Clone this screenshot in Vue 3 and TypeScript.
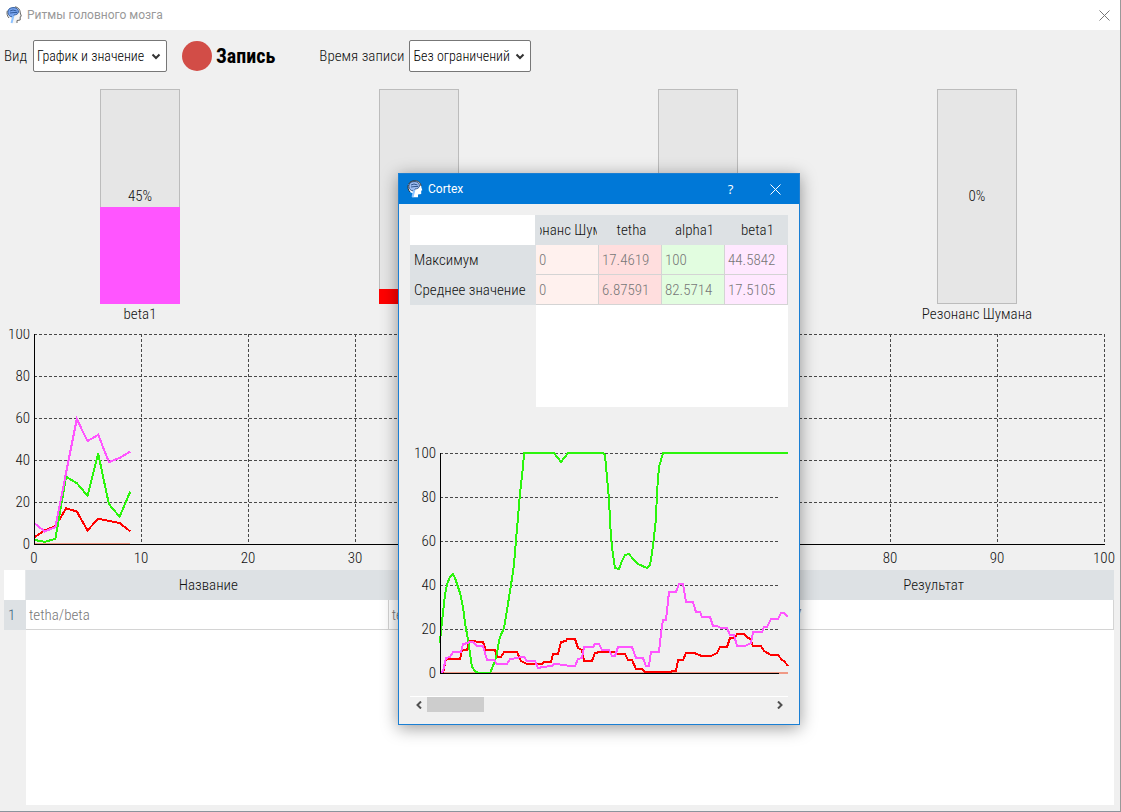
<script setup lang="ts">
import { ref } from 'vue'

interface Rhythm {
  name: string
  value: number
  tone: string
}

interface Series {
  tone: string
  points: string
}

const view = ref('График и значение')
const duration = ref('Без ограничений')

const rhythms: Rhythm[] = [
  { name: 'beta1', value: 45, tone: 'beta' },
  { name: 'tetha', value: 7, tone: 'tetha' },
  { name: 'alpha1', value: 25, tone: 'alpha' },
  { name: 'Резонанс Шумана', value: 0, tone: 'schumann' },
]

const levels = [100, 80, 60, 40, 20, 0]
const seconds = [0, 10, 20, 30, 40, 50, 60, 70, 80, 90, 100]

const toPoints = (values: number[]): string =>
  values.map((v, i) => `${i * 10.7},${(100 - v) * 2.1}`).join(' ')

const liveSeries: Series[] = [
  { tone: 'schumann', points: toPoints([0, 0, 0, 0, 0, 0, 0, 0, 0, 0]) },
  { tone: 'tetha', points: toPoints([3, 6.5, 8.5, 17, 15.5, 6.5, 12, 11, 10, 6]) },
  { tone: 'alpha', points: toPoints([2, 1, 2.5, 32, 29, 23, 43, 19, 13, 25]) },
  { tone: 'beta', points: toPoints([10, 6, 8, 34, 59.5, 49, 52, 39, 41, 44]) },
]

const recordedSeries: Series[] = [
  { tone: 'schumann', points: '0,220 347,220' },
  {
    tone: 'tetha',
    points:
      '2,220 5,206 19,206 21,197 26,197 28,188 42,189 45,197 54,197 56,204 60,204 63,199 76,199 80,208 86,211 101,211 103,209 110,209 112,201 117,201 120,189 125,188 126,186 134,186 137,195 141,197 143,208 151,208 154,200 159,199 174,199 176,201 184,201 187,207 191,207 195,216 201,216 204,219 226,219 235,218 237,207 242,207 245,200 253,200 261,203 270,203 276,200 279,194 286,194 289,185 294,185 296,181 303,181 306,184 309,186 312,193 320,193 323,198 330,202 337,202 341,207 343,208 347,213',
  },
  {
    tone: 'alpha',
    points:
      '-1,190 0,177 2,160 4,142 6,131 9,124 12,121 14,125 16,131 19,140 22,154 24,170 27,187 29,200 31,214 34,218 37,220 49,220 52,213 55,205 57,194 59,184 63,175 66,157 70,132 73,112 75,87 77,64 79,40 82,14 83,0 113,0 120,9 127,0 162,0 164,2 166,24 168,47 170,85 172,102 174,115 178,116 181,108 184,102 188,101 192,106 197,111 206,115 209,112 211,100 213,84 215,65 216,39 218,14 222,0 347,0',
  },
  {
    tone: 'beta',
    points:
      '-1,220 2,218 5,205 9,204 12,199 20,199 22,191 27,190 28,189 32,189 36,193 42,193 46,207 53,207 56,211 66,211 69,206 77,205 79,204 83,204 86,208 94,208 97,215 102,214 111,213 113,211 125,212 127,213 134,213 137,206 141,205 143,194 152,194 154,191 158,191 161,197 168,197 171,203 174,203 177,194 191,194 195,205 202,205 205,213 208,213 210,199 218,199 220,180 222,167 225,167 228,139 235,139 238,131 242,131 245,149 252,149 255,159 259,159 261,164 269,164 272,173 276,173 280,175 286,175 289,182 293,182 296,193 304,193 310,190 312,179 321,179 323,174 326,174 330,166 337,166 340,160 343,160 347,164',
  },
]

const statColumns = [
  { name: 'Резонанс Шумана', tone: 'schumann', max: '0', mean: '0' },
  { name: 'tetha', tone: 'tetha', max: '17.4619', mean: '6.87591' },
  { name: 'alpha1', tone: 'alpha', max: '100', mean: '82.5714' },
  { name: 'beta1', tone: 'beta', max: '44.5842', mean: '17.5105' },
]
</script>

<template>
  <div class="window">
    <header class="titlebar">
      <svg class="logo" viewBox="0 0 16 18" aria-hidden="true">
        <path d="M3 12C1 10 0.700 7 1.500 4.800C2.600 2 5 0.800 8 0.800C12 0.800 14.300 3.500 14.300 7L15.300 10.200L14.200 10.800L14.200 14L11 14.500L11 17.200L5 17.200L6 13.500Z" fill="#f4f4f4" />
        <path d="M2 5C2.500 2.500 5 1.500 8 1.600C11 1.700 12.600 3.500 12.400 6C12.200 8.200 10 8.800 8 9L6.500 11L4.500 10.500C2.500 9.500 1.500 7.500 2 5Z" fill="#78a4ee" stroke="#315d9e" />
        <path d="M4 5L7 4L10.500 5M4 7L8 6.500L11 6.500" fill="none" stroke="#315d9e" />
        <path d="M7.500 9.500L5.500 17" fill="none" stroke="#8fc3ff" stroke-width="2" />
        <path d="M3 12C1 10 0.600 7 1.300 4.800M9 0.800C12.300 1.200 14.200 3.500 14.300 7L15.300 10.200L14.200 10.800L14.200 14L11 14.500L11 17" fill="none" stroke="#666" />
      </svg>
      <h1 class="caption">Ритмы головного мозга</h1>
      <button class="close" type="button" aria-label="Закрыть">
        <svg viewBox="0 0 11 11" aria-hidden="true"><path d="M0.500 0.500L10.500 10.500M10.500 0.500L0.500 10.500" /></svg>
      </button>
    </header>

    <div class="toolbar">
      <label for="view">Вид</label>
      <div class="combo combo-view">
        <select id="view" v-model="view">
          <option>График и значение</option>
        </select>
        <svg viewBox="0 0 8 5" aria-hidden="true"><path d="M0.500 0.500L4 4L7.500 0.500" /></svg>
      </div>
      <button class="record" type="button"><span class="dot"></span>Запись</button>
      <label for="duration">Время записи</label>
      <div class="combo combo-duration">
        <select id="duration" v-model="duration">
          <option>Без ограничений</option>
        </select>
        <svg viewBox="0 0 8 5" aria-hidden="true"><path d="M0.500 0.500L4 4L7.500 0.500" /></svg>
      </div>
    </div>

    <section class="gauges">
      <div v-for="r in rhythms" :key="r.name" class="gauge">
        <div class="track" role="meter" :aria-label="r.name" :aria-valuenow="r.value" aria-valuemin="0" aria-valuemax="100">
          <div class="fill" :class="r.tone" :style="{ height: r.value + '%' }"></div>
          <span class="percent">{{ r.value }}%</span>
        </div>
        <span class="gauge-name">{{ r.name }}</span>
      </div>
    </section>

    <section class="chart live">
      <div class="y-axis"><span v-for="l in levels" :key="l">{{ l }}</span></div>
      <svg class="plot" viewBox="0 0 1070 210" preserveAspectRatio="none" aria-hidden="true">
        <line v-for="l in levels.slice(0, 5)" :key="'h' + l" class="grid" x1="0" x2="1070" :y1="(100 - l) * 2.1 + 0.5" :y2="(100 - l) * 2.1 + 0.5" />
        <line v-for="s in seconds.slice(1)" :key="'v' + s" class="grid" :x1="s * 10.7 + 0.5" :x2="s * 10.7 + 0.5" y1="0" y2="210" />
        <polyline v-for="s in liveSeries" :key="s.tone" class="curve" :class="s.tone" :points="s.points" />
        <path class="axis" d="M0.500 0V210.500H1071" />
      </svg>
      <div class="x-axis"><span v-for="s in seconds" :key="s">{{ s }}</span></div>
    </section>

    <section class="results">
      <table>
        <colgroup><col class="index" /><col /><col /><col /></colgroup>
        <thead>
          <tr><td></td><th>Название</th><th>Формула</th><th>Результат</th></tr>
        </thead>
        <tbody>
          <tr><th>1</th><td>tetha/beta</td><td>tetha/beta1</td><td>0.39267</td></tr>
        </tbody>
      </table>
      <div class="blank"></div>
    </section>

    <div class="dialog" role="dialog" aria-labelledby="dialog-title">
      <header class="dialog-bar">
        <svg class="logo" viewBox="0 0 16 18" aria-hidden="true">
          <path d="M3 12C1 10 0.700 7 1.500 4.800C2.600 2 5 0.800 8 0.800C12 0.800 14.300 3.500 14.300 7L15.300 10.200L14.200 10.800L14.200 14L11 14.500L11 17.200L5 17.200L6 13.500Z" fill="#fff" />
          <path d="M2 5C2.500 2.500 5 1.500 8 1.600C11 1.700 12.600 3.500 12.400 6C12.200 8.200 10 8.800 8 9L6.500 11L4.500 10.500C2.500 9.500 1.500 7.500 2 5Z" fill="#9dbcf0" stroke="#31568e" />
          <path d="M4 5L7 4L10.500 5M4 7L8 6.500L11 6.500" fill="none" stroke="#31568e" />
          <path d="M7.500 9.500L5.500 17" fill="none" stroke="#8fc3ff" stroke-width="2" />
          <path d="M3 12C1 10 0.600 7 1.300 4.800M1.800 4C3 1.500 5 0.800 8 0.800C12 0.800 13.800 3.500 14 6" fill="none" stroke="#333" />
        </svg>
        <h2 id="dialog-title" class="caption">Cortex</h2>
        <button class="help" type="button" aria-label="Справка">?</button>
        <button class="close" type="button" aria-label="Закрыть">
          <svg viewBox="0 0 11 11" aria-hidden="true"><path d="M0.500 0.500L10.500 10.500M10.500 0.500L0.500 10.500" /></svg>
        </button>
      </header>
      <div class="dialog-body">
        <div class="stats">
          <table>
            <colgroup><col class="stat-label" /><col v-for="c in statColumns" :key="c.name" /></colgroup>
            <thead>
              <tr>
                <td></td>
                <th v-for="c in statColumns" :key="c.name"><div class="clip"><span>{{ c.name }}</span></div></th>
              </tr>
            </thead>
            <tbody>
              <tr>
                <th>Максимум</th>
                <td v-for="c in statColumns" :key="c.name" :class="c.tone">{{ c.max }}</td>
              </tr>
              <tr>
                <th>Среднее значение</th>
                <td v-for="c in statColumns" :key="c.name" :class="c.tone">{{ c.mean }}</td>
              </tr>
            </tbody>
          </table>
          <div class="stats-blank"></div>
        </div>

        <div class="chart recorded">
          <div class="y-axis"><span v-for="l in levels" :key="l">{{ l }}</span></div>
          <svg class="plot" viewBox="-1 0 348 220" preserveAspectRatio="none" aria-hidden="true">
            <line v-for="l in levels.slice(0, 5)" :key="l" class="grid" x1="-1" x2="337" :y1="220.5 - l * 2.2" :y2="220.5 - l * 2.2" />
            <polyline v-for="s in recordedSeries" :key="s.tone" class="curve" :class="s.tone" :points="s.points" />
            <path class="axis" d="M-0.500 0V220.500H338" />
          </svg>
        </div>

        <div class="scrollbar">
          <button type="button" aria-label="Назад"><svg viewBox="0 0 6 8" aria-hidden="true"><path d="M5 0.500L1.500 4L5 7.500" /></svg></button>
          <div class="rail"><div class="thumb"></div></div>
          <button type="button" aria-label="Вперёд"><svg viewBox="0 0 6 8" aria-hidden="true"><path d="M1 0.500L4.500 4L1 7.500" /></svg></button>
        </div>
      </div>
    </div>
  </div>
</template>

<style>
body {
  margin: 0;
}
</style>

<style scoped>
.window {
  position: relative;
  box-sizing: border-box;
  min-height: 100vh;
  display: flex;
  flex-direction: column;
  overflow: hidden;
  background: #f0f0f0;
  border-right: 1px solid #999;
  border-bottom: 1px solid #8a949c;
  color: #111;
  font: 300 15px/20px 'Roboto Condensed', Roboto, 'Liberation Sans', sans-serif;
}

button,
select {
  font: inherit;
  color: inherit;
}

button {
  display: flex;
  align-items: center;
  justify-content: center;
  padding: 0;
  border: 0;
  background: none;
}

svg {
  display: block;
}

.titlebar,
.dialog-bar {
  display: flex;
  align-items: center;
  height: 30px;
}

.titlebar {
  padding: 0 10px 0 6px;
  background: #fff;
}

.logo {
  width: 16px;
  height: 18px;
}

.caption {
  flex: 1;
  margin: 0 0 0 5px;
  font: 400 12px/16px Roboto, 'Noto Sans', sans-serif;
}

.titlebar .caption {
  color: #999;
}

.close svg {
  width: 11px;
  height: 11px;
  fill: none;
  stroke: #777;
}

.toolbar {
  display: flex;
  align-items: center;
  padding: 10px 4px 17px;
}

.combo {
  position: relative;
}

.combo-view {
  width: 134px;
  margin: 0 15px 0 6px;
}

.combo-duration {
  width: 122px;
  margin-left: 5px;
}

.combo select {
  box-sizing: border-box;
  display: block;
  width: 100%;
  height: 32px;
  padding: 0 3px;
  appearance: none;
  background: #fff;
  border: 1px solid #777;
  border-radius: 2px;
  font-size: 14px;
  color: #000;
}

.combo svg {
  position: absolute;
  right: 7px;
  top: 14px;
  width: 8px;
  height: 5px;
  fill: none;
  stroke: #333;
  stroke-width: 2;
  overflow: visible;
  pointer-events: none;
}

.record {
  gap: 4px;
  margin-right: 44px;
  color: #000;
  font-size: 20px;
  font-weight: 700;
}

.dot {
  width: 30px;
  height: 30px;
  border-radius: 50%;
  background: #d24d47;
}

.gauges {
  display: flex;
  justify-content: space-between;
  padding: 0 103px 0 100px;
}

.gauge {
  display: flex;
  flex-direction: column;
  align-items: center;
  width: 80px;
}

.track {
  position: relative;
  box-sizing: border-box;
  display: flex;
  flex-direction: column;
  justify-content: flex-end;
  width: 100%;
  height: 215px;
  background: #e6e6e6;
  box-shadow: inset 0 0 0 1px #bcbcbc;
}

.fill.beta {
  background: #ff55ff;
}

.fill.tetha {
  background: #f00;
}

.fill.alpha {
  background: #2bf50c;
}

.percent {
  position: absolute;
  inset: 0 0 2px;
  display: flex;
  align-items: center;
  justify-content: center;
}

.gauge-name {
  white-space: nowrap;
}

.chart {
  display: grid;
}

.live {
  grid-template: 210px 26px / 34px 1fr;
  padding: 5px 16px 0 0;
  margin-top: 5px;
  overflow: hidden;
}

.y-axis {
  display: flex;
  flex-direction: column;
  justify-content: space-between;
  align-items: flex-end;
  padding-right: 4px;
}

.y-axis span {
  height: 0;
  line-height: 0;
}

.x-axis {
  grid-column: 2;
  display: flex;
  justify-content: space-between;
  padding-top: 4px;
}

.x-axis span {
  display: flex;
  justify-content: center;
  width: 0;
}

.plot {
  width: 100%;
  height: 100%;
  min-width: 0;
  fill: none;
  overflow: visible;
  shape-rendering: crispEdges;
}

.plot > * {
  vector-effect: non-scaling-stroke;
}

.grid {
  stroke: #484848;
  stroke-dasharray: 3 2;
}

.axis {
  stroke: #000;
}

.curve {
  stroke-width: 2;
}

.curve.beta {
  stroke: #ff55ff;
}

.curve.tetha {
  stroke: #f00;
}

.curve.alpha {
  stroke: #2bf50c;
}

.curve.schumann {
  stroke: #f09a86;
}

table {
  width: 100%;
  table-layout: fixed;
  border-collapse: separate;
  border-spacing: 0;
}

th,
td {
  box-sizing: border-box;
  height: 30px;
  padding: 0 3px;
  text-align: left;
  font-weight: 300;
}

th {
  background: #dde1e4;
}

thead th {
  padding: 0 2px 0 4px;
  text-align: center;
}

thead td {
  background: #fff;
}

tbody td {
  color: #777;
  border-right: 1px solid #d4d4d4;
  border-bottom: 1px solid #d4d4d4;
}

.results {
  flex: 1;
  display: flex;
  flex-direction: column;
  padding: 0 6px 6px 4px;
}

.results .index {
  width: 22px;
}

.results thead td {
  border-right: 1px solid #e6e8ea;
}

.results tbody td {
  background: #fff;
}

.results tbody th {
  padding-left: 4px;
  color: #35607c;
}

.blank {
  flex: 1;
  margin-left: 22px;
  background: #fff;
}

.dialog {
  position: absolute;
  left: 398px;
  top: 173px;
  box-sizing: border-box;
  width: 402px;
  background: #f0f0f0;
  border: 1px solid #1a7fd4;
  box-shadow: 0 3px 16px rgba(0, 0, 0, 0.4);
}

.dialog-bar {
  padding: 0 18px 0 8px;
  background: #0078d7;
  color: #fff;
}

.help {
  width: 11px;
  margin-right: 34px;
  font: 400 13px/16px 'Open Sans', sans-serif;
}

.dialog .close svg {
  stroke: #fff;
}

.dialog-body {
  padding: 11px;
}

.stats {
  display: flex;
  flex-direction: column;
  height: 192px;
}

.stat-label {
  width: 126px;
}

.stats tbody th {
  padding: 0 4px;
}

.stats thead td {
  border-right: 1px solid #dde1e4;
}

.clip {
  display: flex;
  justify-content: center;
  overflow: hidden;
  white-space: nowrap;
}

td.schumann {
  background: #fff1ee;
}

td.tetha {
  background: #ffdede;
}

td.alpha {
  background: #e2fde0;
}

td.beta {
  background: #ffe8ff;
}

.stats-blank {
  flex: 1;
  margin-left: 126px;
  background: #fff;
}

.recorded {
  grid-template: 220px / 30px 1fr;
  margin-top: 46px;
}

.scrollbar {
  display: flex;
  height: 16px;
  margin-top: 23px;
  border-top: 1px solid #fff;
}

.scrollbar button {
  width: 17px;
}

.scrollbar svg {
  width: 6px;
  height: 8px;
  fill: none;
  stroke: #505050;
  stroke-width: 2;
}

.rail {
  flex: 1;
}

.thumb {
  width: 57px;
  height: 15px;
  background: #cdcdcd;
}
</style>
